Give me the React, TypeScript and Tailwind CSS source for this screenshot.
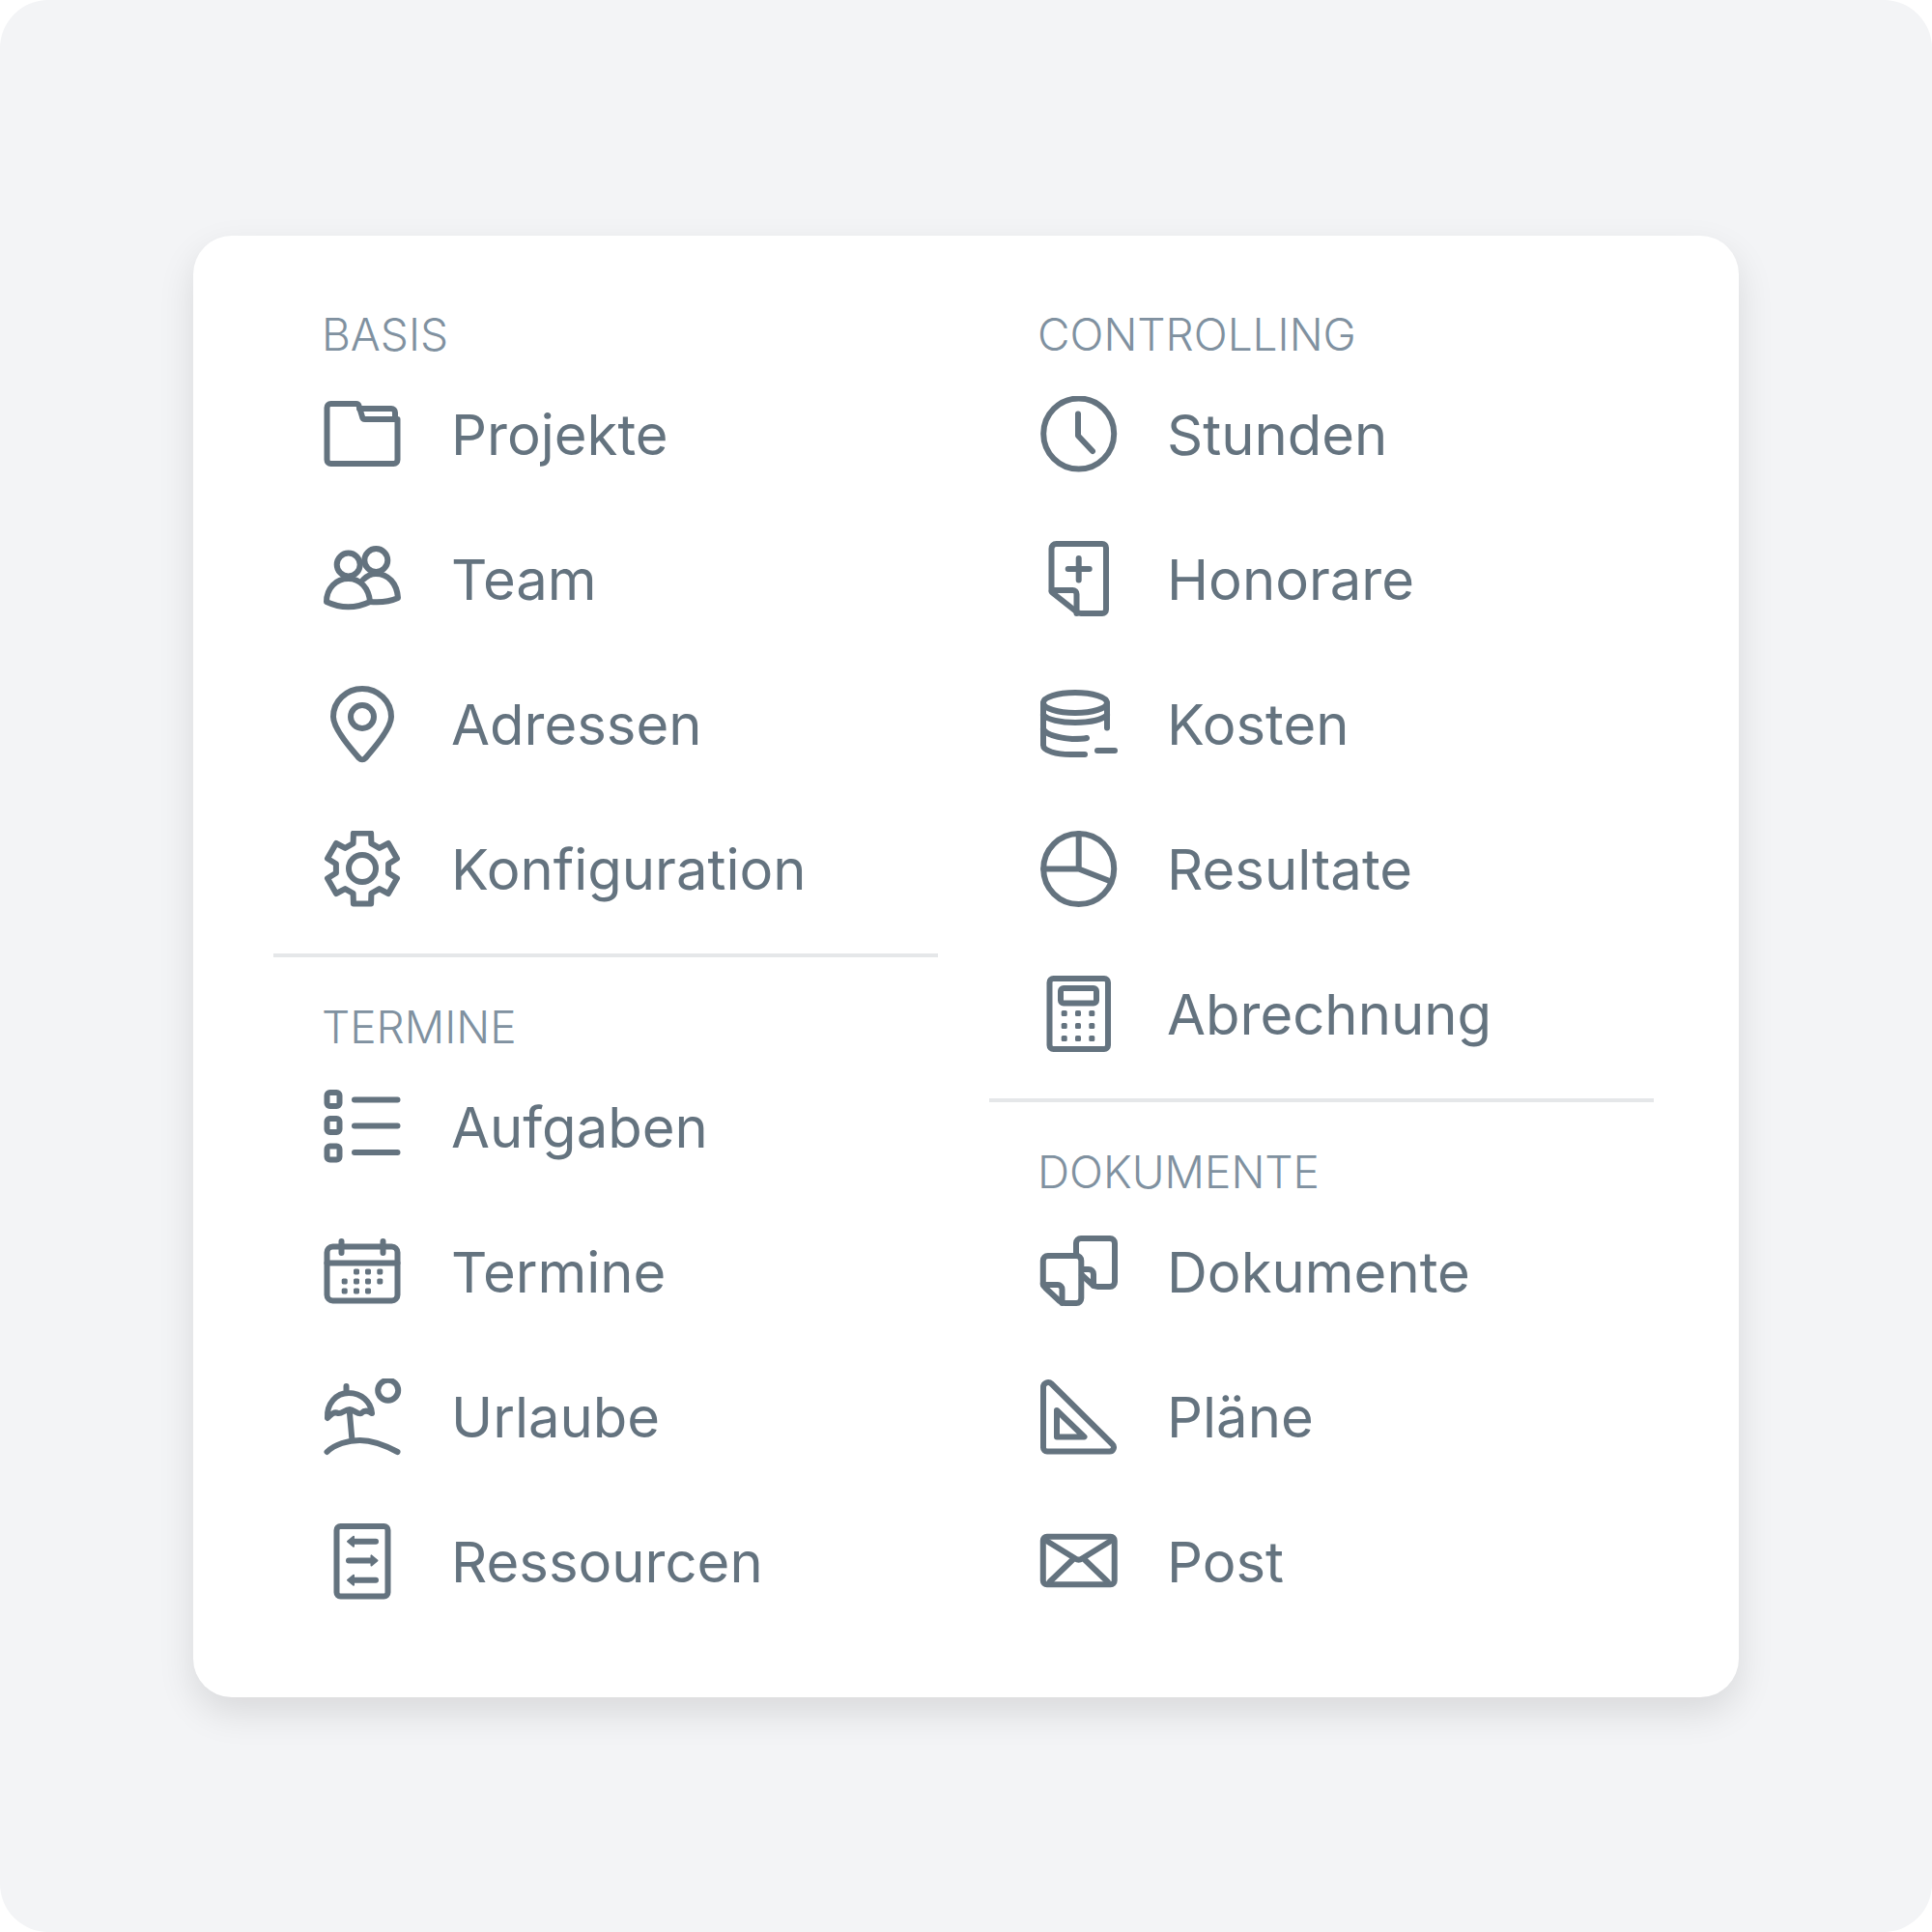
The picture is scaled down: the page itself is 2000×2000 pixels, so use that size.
import { FC, ReactNode } from "react";

const gearPoints = () => {
  const points: string[] = [];
  for (let tooth = 0; tooth < 6; tooth++) {
    const angle = tooth * 60;
    const corners = [
      [27.5, angle - 20],
      [37.5, angle - 14],
      [37.5, angle + 14],
      [27.5, angle + 20],
    ];
    corners.forEach(([radius, degrees]) => {
      const rad = (degrees * Math.PI) / 180;
      points.push(`${(41 + radius * Math.sin(rad)).toFixed(1)},${(39 - radius * Math.cos(rad)).toFixed(1)}`);
    });
  }
  return points.join(" ");
};

const Dots: FC<{ items: number[][]; size?: number }> = ({ items, size = 5.5 }) => (
  <g fill="currentColor" stroke="none">
    {items.map(([x, y]) => (
      <rect key={`${x}-${y}`} x={x - size / 2} y={y - size / 2} width={size} height={size} rx={1.6} />
    ))}
  </g>
);

const icons: Record<string, ReactNode> = {
  folder: (
    <>
      <path d="M4.500 12a4 4 0 0 1 4-4h26a3 3 0 0 1 3 2l3.500 11.500a3 3 0 0 0 3 2.500h33.500v42a4 4 0 0 1-4 4H8.500a4 4 0 0 1-4-4z" />
      <path d="M38 13h33a4 4 0 0 1 4 4v7" />
    </>
  ),
  team: (
    <>
      <circle cx="26.700" cy="24.500" r="12" />
      <circle cx="55.300" cy="20" r="12" />
      <path d="M4 63c0-14 10-24 22.500-24S48 49 49 63c-15 7-30 7-45 0z" />
      <path d="M42 40c4-4 8-6 13-6 13 0 22 10 23 25-9 4-19 5-29 4" />
    </>
  ),
  pin: (
    <>
      <circle cx="41" cy="32" r="12" />
      <path d="M41 3C24.500 3 11 16 11 32c0 14 22 37 27 43a4 4 0 0 0 6 0c5-6 27-29 27-43C71 16 57.500 3 41 3z" />
    </>
  ),
  gear: (
    <>
      <polygon points={gearPoints()} />
      <circle cx="41" cy="39" r="14" />
    </>
  ),
  list: (
    <>
      <rect x="4.500" y="4" width="13" height="14" rx="3" />
      <rect x="4.500" y="31" width="13" height="14" rx="3" />
      <rect x="4.500" y="59.500" width="13" height="14" rx="3" />
      <path d="M33 11.500h44.500M33 38.500h44.500M33 66h44.500" />
    </>
  ),
  calendar: (
    <>
      <rect x="4.500" y="13.500" width="73" height="56" rx="6" />
      <path d="M4.500 30.500h73M19.500 8v12M62.500 8v12" />
      <Dots
        size={6}
        items={[
          [35, 39.4],
          [47, 39.4],
          [59.3, 39.4],
          [22.7, 49.4],
          [35, 49.4],
          [47, 49.4],
          [59.3, 49.4],
          [22.7, 59.4],
          [35, 59.4],
          [47, 59.4],
        ]}
      />
    </>
  ),
  beach: (
    <>
      <circle cx="67.700" cy="12.300" r="10.500" />
      <path d="M24.500 8v7M5 41c-1-15 9-26 22-26s23 9 24 21c-4-3-8-3-11 0-3 2-8-4-12-4-5 0-8 5-12 4-4-2-7 1-11 5z" />
      <path d="M27.700 33l2.600 29M4.500 76c8-8 22-12 34-12s26 5 39 12" />
    </>
  ),
  sliders: (
    <>
      <rect x="14.500" y="3" width="53" height="72.500" rx="4" />
      <path d="M31 18.700h24M27 38.400h24M31 58.700h24" />
      <path
        d="M26 18.700l6-5v10zM56.500 38.400l-6-5v10zM26 58.700l6-5v10z"
        fill="currentColor"
        strokeWidth="2"
      />
    </>
  ),
  clock: (
    <>
      <circle cx="41.700" cy="39" r="36.500" />
      <path d="M41 18.500V41l15 16" />
    </>
  ),
  honorar: (
    <>
      <path d="M13.500 50V8a5 5 0 0 1 5-5H66a4 4 0 0 1 4 4v64a4 4 0 0 1-4 4H44a8 8 0 0 1-5-2L15 54a4 4 0 0 1-1.500-4z" />
      <path d="M14 51h21.500a4 4 0 0 1 4 4v20M30.700 29h22M41.700 18v22.500" />
    </>
  ),
  coins: (
    <>
      <ellipse cx="38" cy="17.500" rx="33" ry="10.500" />
      <path d="M5 17.500v44c0 6 14 9.500 28 9.500h15M71 17.500v26M5 30c4 5 18 8 33 8s28-3 33-8M5 45c4 6 17 9 30 10 6 0 11 0 15-1M61 67h18" />
    </>
  ),
  chart: (
    <>
      <circle cx="41.700" cy="39.500" r="36.500" />
      <path d="M41.700 3v36.500H5.200M41.700 39.500L73 51.700" />
    </>
  ),
  calculator: (
    <>
      <rect x="11.500" y="3" width="60.500" height="73" rx="4" />
      <rect x="23" y="13" width="37" height="15.500" rx="3" />
      <Dots
        size={6}
        items={[
          [26.7, 39],
          [41, 39],
          [55.3, 39],
          [26.7, 52],
          [41, 52],
          [55.3, 52],
          [26.7, 65],
          [41, 65],
          [55.3, 65],
        ]}
      />
    </>
  ),
  docs: (
    <>
      <path d="M39 23V10a5 5 0 0 1 5-5h30a5 5 0 0 1 5 5v40a5 5 0 0 1-5 5H62a8 8 0 0 1-6-2L45 43" />
      <path d="M45 37h7a5 5 0 0 1 5 5v12" />
      <path d="M4.800 50V28a5 5 0 0 1 5-5h29.500a5 5 0 0 1 5 5v39a5 5 0 0 1-5 5H28a8 8 0 0 1-6-2L7 56a6 6 0 0 1-2.200-6z" />
      <path d="M5 53h15a4.500 4.500 0 0 1 4.500 4.500V72" />
    </>
  ),
  triangle: (
    <>
      <path d="M5 9a5 5 0 0 1 8.500-3.500l63 62.500a4.300 4.300 0 0 1-3 7.500H9a4 4 0 0 1-4-4z" />
      <path d="M19 33l28.500 27.500H19z" />
    </>
  ),
  mail: (
    <>
      <rect x="4.800" y="13.800" width="73.900" height="49.400" rx="4" />
      <path d="M8.300 18l30 18.500a6 6 0 0 0 6.700 0L75 18M11.700 60.500L35 38M71.700 60.500L48.300 38" />
    </>
  ),
};

const sections = [
  [
    {
      title: "BASIS",
      items: [
        { label: "Projekte", icon: "folder" },
        { label: "Team", icon: "team" },
        { label: "Adressen", icon: "pin" },
        { label: "Konfiguration", icon: "gear" },
      ],
    },
    {
      title: "TERMINE",
      items: [
        { label: "Aufgaben", icon: "list" },
        { label: "Termine", icon: "calendar" },
        { label: "Urlaube", icon: "beach" },
        { label: "Ressourcen", icon: "sliders" },
      ],
    },
  ],
  [
    {
      title: "CONTROLLING",
      items: [
        { label: "Stunden", icon: "clock" },
        { label: "Honorare", icon: "honorar" },
        { label: "Kosten", icon: "coins" },
        { label: "Resultate", icon: "chart" },
        { label: "Abrechnung", icon: "calculator" },
      ],
    },
    {
      title: "DOKUMENTE",
      items: [
        { label: "Dokumente", icon: "docs" },
        { label: "Pläne", icon: "triangle" },
        { label: "Post", icon: "mail" },
      ],
    },
  ],
];

const App: FC = () => {
  return (
    <div className="h-[2000px] w-[2000px] bg-white font-['Inter',sans-serif]">
      <div className="flex h-full w-full items-center justify-center rounded-[50px] bg-[#f3f4f6]">
        <div className="flex h-[1513px] w-[1600px] gap-[53px] rounded-[40px] bg-white pb-[65px] pl-[83px] pt-[75px] shadow-[0_16px_38px_rgba(0,0,0,0.11)]">
          {sections.map((column, columnIndex) => (
            <div key={columnIndex} className="w-[688px]">
              {column.map((section, sectionIndex) => (
                <section key={section.title}>
                  {sectionIndex > 0 && <div className="mb-[45px] mt-[12px] h-1 bg-[#e5e7e9]" />}
                  <h2 className="h-14 pl-[50px] text-[46px] leading-[55px] font-light text-[#8091a0]">{section.title}</h2>
                  {section.items.map((item) => (
                    <div key={item.label} className="flex h-[150px] items-center gap-[51px] pl-[51px] text-[#64737f]">
                      <svg
                        viewBox="0 0 82 80"
                        className="h-20 w-[82px] shrink-0"
                        fill="none"
                        stroke="currentColor"
                        strokeWidth="6"
                        strokeLinecap="round"
                        strokeLinejoin="round"
                      >
                        {icons[item.icon]}
                      </svg>
                      <span className="text-[58px] leading-none">{item.label}</span>
                    </div>
                  ))}
                </section>
              ))}
            </div>
          ))}
        </div>
      </div>
    </div>
  );
};

export default App;
